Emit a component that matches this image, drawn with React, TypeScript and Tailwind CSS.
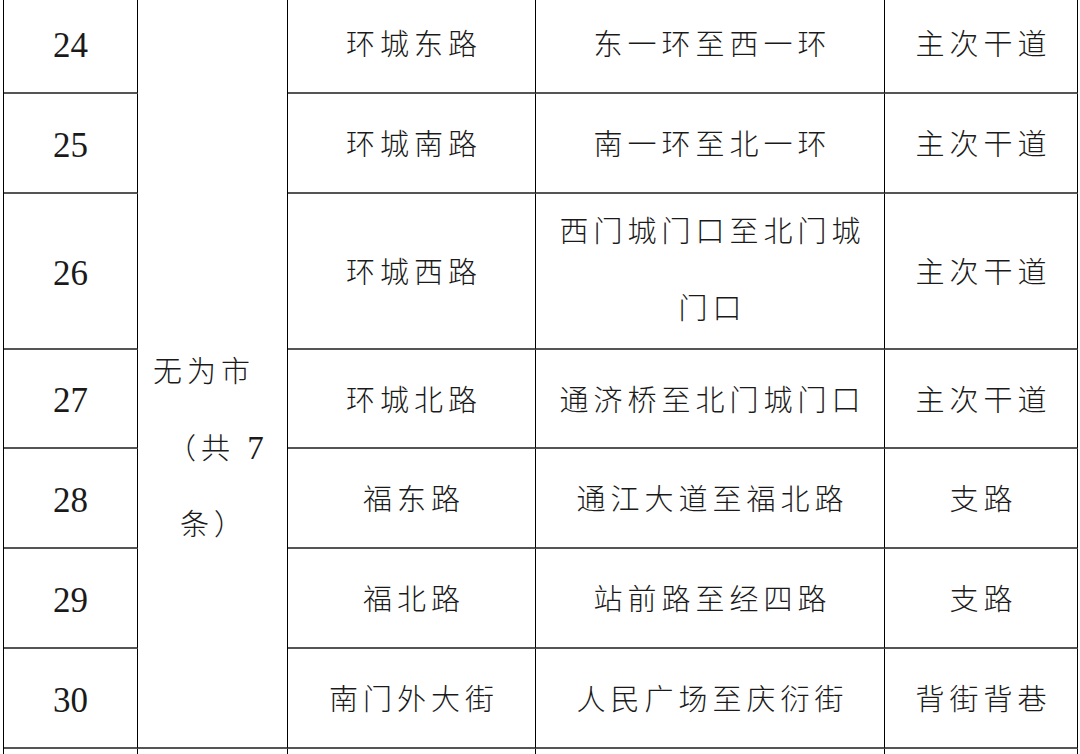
const rows = [
  { no: '24', road: '环城东路', range: ['东一环至西一环'], kind: '主次干道', h: 'h-[100px]' },
  { no: '25', road: '环城南路', range: ['南一环至北一环'], kind: '主次干道', h: 'h-[100px]' },
  { no: '26', road: '环城西路', range: ['西门城门口至北门城', '门口'], kind: '主次干道', h: 'h-[156px]' },
  { no: '27', road: '环城北路', range: ['通济桥至北门城门口'], kind: '主次干道', h: 'h-[99px]' },
  { no: '28', road: '福东路', range: ['通江大道至福北路'], kind: '支路', h: 'h-[100px]' },
  { no: '29', road: '福北路', range: ['站前路至经四路'], kind: '支路', h: 'h-[100px]' },
  { no: '30', road: '南门外大街', range: ['人民广场至庆衍街'], kind: '背街背巷', h: 'h-[100px]' },
];

const cell = 'flex items-center justify-center border-r border-b-2 border-r-black border-b-[#555]';
const cjk = 'text-[29px] font-light tracking-[5px] pl-[5px] text-[#1a1a1a]';

export default function App() {
  return (
    <div
      className="h-[754px] w-[1080px] overflow-hidden bg-white"
      style={{ fontFamily: '"Liberation Serif", "Noto Sans CJK SC", serif' }}
    >
      <div className="ml-[3px] -mt-[6px] grid w-[1074px] grid-cols-[134px_150px_248px_349px_193px] border-l border-black">
        {rows.map((r, i) => (
          <div key={r.no} className="contents">
            <div className={`${cell} ${r.h} pt-[6px] text-[35px] text-[#1a1a1a]`}>{r.no}</div>
            {i === 0 && (
              <div className="row-span-7 border-r border-b-2 border-r-black border-b-[#555] pt-[340px] text-[29px] font-light leading-[76px] tracking-[5px] text-[#1a1a1a]">
                <div className="pl-[15px]">无为市</div>
                <div className="pl-[29px]">
                  （共 <span className="text-[33px] font-normal">7</span>
                </div>
                <div className="pl-[42px]">条）</div>
              </div>
            )}
            <div className={`${cell} ${cjk} pt-[6px]`}>{r.road}</div>
            <div className={`${cell} ${cjk} flex-col ${r.range.length > 1 ? 'leading-[77px]' : 'pt-[6px]'}`}>
              {r.range.map((t) => (
                <span key={t}>{t}</span>
              ))}
            </div>
            <div className={`${cell} ${cjk} pt-[6px]`}>{r.kind}</div>
          </div>
        ))}
        <div className={`${cell} h-[40px]`} />
        <div className={`${cell} h-[40px]`} />
        <div className={`${cell} h-[40px]`} />
        <div className={`${cell} h-[40px]`} />
        <div className={`${cell} h-[40px]`} />
      </div>
    </div>
  );
}
